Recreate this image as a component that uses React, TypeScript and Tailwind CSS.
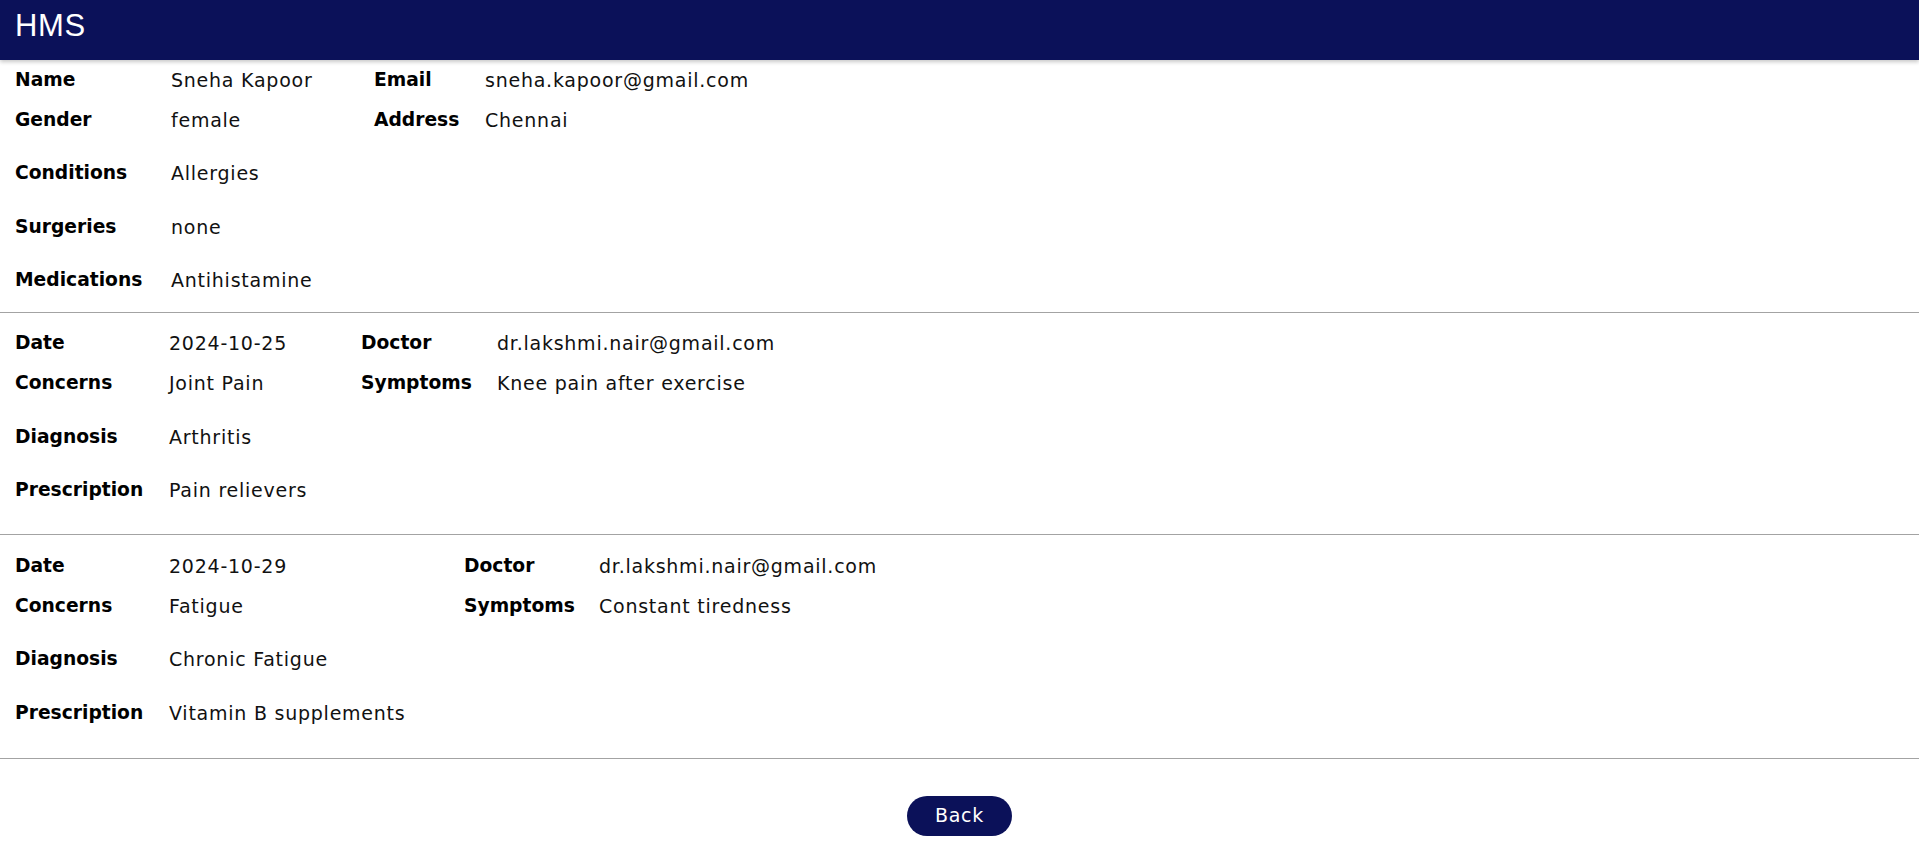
import React from "react";

type Row = [string, string, string?, string?];

const Label = ({ children }: { children: React.ReactNode }) => (
  <div className="font-bold text-[18.7px] text-black whitespace-nowrap">{children}</div>
);
const Value = ({ children }: { children: React.ReactNode }) => (
  <div className="text-[19px] tracking-[0.04em] text-[#111] whitespace-nowrap">{children}</div>
);

function Section({
  cols,
  top,
  rest,
  className,
}: {
  cols: string;
  top: Row[];
  rest: Row[];
  className: string;
}) {
  return (
    <section className={`border-b border-[#a3a3a3] pl-[15px] ${className}`}>
      {top.map((r, i) => (
        <div key={i} className={`grid ${cols} h-[40px] leading-[40px]`}>
          <Label>{r[0]}</Label>
          <Value>{r[1]}</Value>
          <Label>{r[2]}</Label>
          <Value>{r[3]}</Value>
        </div>
      ))}
      {rest.map((r, i) => (
        <div key={i} className={`grid ${cols} h-[40px] leading-[40px] mt-[13.4px]`}>
          <Label>{r[0]}</Label>
          <Value>{r[1]}</Value>
        </div>
      ))}
    </section>
  );
}

export default function App() {
  return (
    <div className="min-h-screen bg-white font-['DejaVu_Sans',sans-serif]">
      <header className="relative z-10 h-[60px] bg-[#0b1159] pl-[15px] pt-[10px] shadow-[0_2px_4px_rgba(0,0,0,0.22)]">
        <h1 className="font-['Liberation_Sans',Arial,sans-serif] text-[31px] leading-[31px] tracking-[0.02em] text-white">
          HMS
        </h1>
      </header>
      <main>
        <Section
          className="pb-[12px]"
          cols="grid-cols-[156px_203px_111px_1fr]"
          top={[
            ["Name", "Sneha Kapoor", "Email", "sneha.kapoor@gmail.com"],
            ["Gender", "female", "Address", "Chennai"],
          ]}
          rest={[
            ["Conditions", "Allergies"],
            ["Surgeries", "none"],
            ["Medications", "Antihistamine"],
          ]}
        />
        <Section
          className="pt-[10px] pb-[24px]"
          cols="grid-cols-[154px_192px_136px_1fr]"
          top={[
            ["Date", "2024-10-25", "Doctor", "dr.lakshmi.nair@gmail.com"],
            ["Concerns", "Joint Pain", "Symptoms", "Knee pain after exercise"],
          ]}
          rest={[
            ["Diagnosis", "Arthritis"],
            ["Prescription", "Pain relievers"],
          ]}
        />
        <Section
          className="pt-[11px] pb-[25px]"
          cols="grid-cols-[154px_295px_135px_1fr]"
          top={[
            ["Date", "2024-10-29", "Doctor", "dr.lakshmi.nair@gmail.com"],
            ["Concerns", "Fatigue", "Symptoms", "Constant tiredness"],
          ]}
          rest={[
            ["Diagnosis", "Chronic Fatigue"],
            ["Prescription", "Vitamin B supplements"],
          ]}
        />
        <div className="flex justify-center pt-[37px]">
          <button className="h-[40px] w-[105px] rounded-full bg-[#0b1159] text-[19px] tracking-[0.04em] text-white">
            Back
          </button>
        </div>
      </main>
    </div>
  );
}
